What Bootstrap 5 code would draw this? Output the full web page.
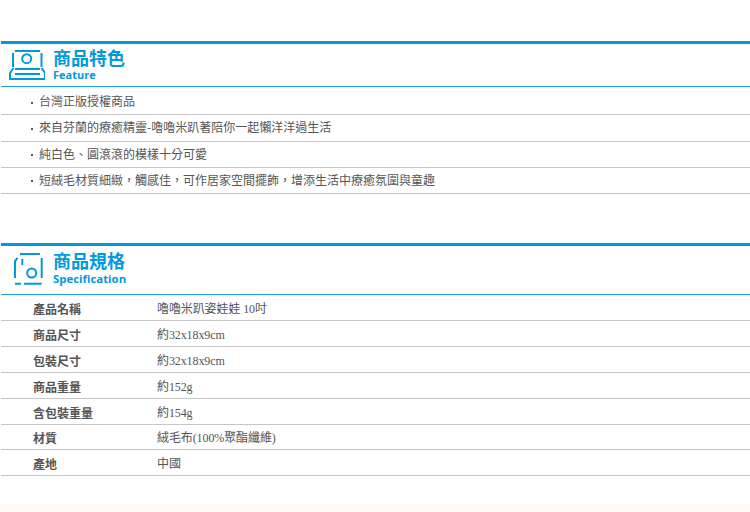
<!DOCTYPE html>
<html lang="zh-Hant">
<head>
<meta charset="utf-8">
<title>商品</title>
<link href="https://cdn.jsdelivr.net/npm/bootstrap@5.3.0/dist/css/bootstrap.min.css" rel="stylesheet">
<style>
html,body{height:512px;overflow:hidden}
body{background:#fff;font-family:"Liberation Serif","Noto Sans CJK TC",serif;font-size:12px;color:#555;padding-top:41px;padding-left:1px;position:relative}
.sec-head{border-top:3px solid #0099dd;border-bottom:1px solid #1aa3e0;height:46px;gap:8px;padding-left:8px;color:#0099dd;font-family:"Noto Sans CJK TC",sans-serif}
.sec-head-tall{height:52px}
.sec-head svg{flex:none;display:block}
.h-main{font-size:18px;font-weight:700;line-height:21px;margin-top:3px}
.sec-head-tall .h-main{margin-top:4px}
.h-sub{font-size:11px;font-weight:700;line-height:14px;margin-top:0;font-family:"Open Sans","Noto Sans CJK TC",sans-serif}
.sec-head-tall .h-sub{margin-top:1px;font-size:11.400px}
.feat-list{--bs-list-group-bg:transparent;--bs-list-group-color:#555;--bs-list-group-border-color:#c6c6c6;padding-top:2px}
.feat-row{height:26.250px;line-height:24px;padding:0 0 0 30px!important;border-width:0 0 1px!important;border-radius:0!important;font-family:"Noto Sans CJK TC",sans-serif}
.feat-row::before{content:"";display:inline-block;width:2px;height:2px;background:#555;margin-right:6px;vertical-align:middle}
.gap-mid{height:49px}
.spec{--bs-table-bg:transparent;--bs-table-color:#555;--bs-table-border-color:#c6c6c6;margin:0;width:749px;table-layout:fixed;border-collapse:separate;border-spacing:0;border:0}
.spec th,.spec td{height:26px;padding:3px 0 0;border-width:0 0 1px;border-style:solid;border-color:#c6c6c6;vertical-align:middle;font-size:12px;line-height:14px;font-family:"Liberation Serif","Noto Sans CJK TC",serif}
.spec tr:nth-child(n+5) th,.spec tr:nth-child(n+5) td{height:25.500px}
.spec th{width:156px;padding-left:32px;font-weight:700;font-family:"Noto Sans CJK TC",sans-serif}
.spec td{letter-spacing:-.1px}
.foot-tint{position:absolute;left:0;right:0;bottom:0;height:8px;background:#fff8f7}
</style>
</head>
<body>
<section>
<header class="sec-head d-flex align-items-start">
<svg width="36" height="38" viewBox="0 0 36 38" fill="none" stroke="#0099dd" stroke-width="2"><path d="M6 7H31"/><path d="M4 9V23M32.500 9V23"/><circle cx="17.700" cy="14.700" r="4.500"/><path d="M6 25H31"/><path d="M4.500 24L1 29V35H36V29L32.500 24"/><path d="M6 30H31"/></svg>
<div><div class="h-main">商品特色</div><div class="h-sub">Feature</div></div>
</header>
<ul class="list-group feat-list">
<li class="list-group-item feat-row">台灣正版授權商品</li>
<li class="list-group-item feat-row">來自芬蘭的療癒精靈-嚕嚕米趴著陪你一起懶洋洋過生活</li>
<li class="list-group-item feat-row">純白色、圓滾滾的模樣十分可愛</li>
<li class="list-group-item feat-row">短絨毛材質細緻，觸感佳，可作居家空間擺飾，增添生活中療癒氛圍與童趣</li>
</ul>
</section>
<div class="gap-mid"></div>
<section>
<header class="sec-head sec-head-tall d-flex align-items-start">
<svg width="36" height="40" viewBox="0 0 36 40" fill="none" stroke="#0099dd" stroke-width="2"><path d="M11 8H31"/><path d="M8.500 12L6 15V32"/><path d="M13.300 13V19"/><path d="M32.700 12V32"/><circle cx="22.700" cy="27" r="4.500"/><path d="M6 37.700H12M15 37.700H32.700"/></svg>
<div><div class="h-main">商品規格</div><div class="h-sub">Specification</div></div>
</header>
<table class="table spec">
<tbody>
<tr><th>產品名稱</th><td>嚕嚕米趴姿娃娃 10吋</td></tr>
<tr><th>商品尺寸</th><td>約32x18x9cm</td></tr>
<tr><th>包裝尺寸</th><td>約32x18x9cm</td></tr>
<tr><th>商品重量</th><td>約152g</td></tr>
<tr><th>含包裝重量</th><td>約154g</td></tr>
<tr><th>材質</th><td>絨毛布(100%聚酯纖維)</td></tr>
<tr><th>產地</th><td>中國</td></tr>
</tbody>
</table>
</section>
<div class="foot-tint"></div>
</body>
</html>
